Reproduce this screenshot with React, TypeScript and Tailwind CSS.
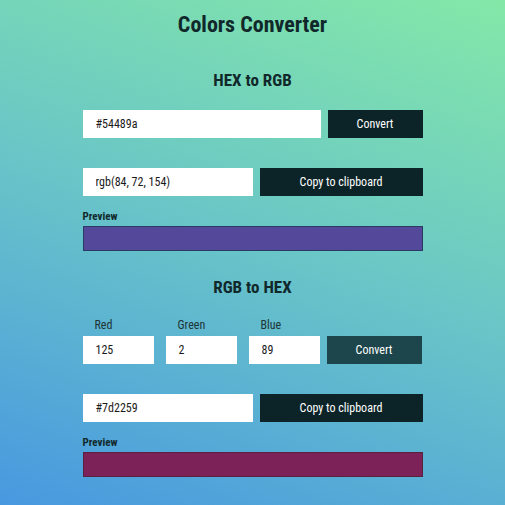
import { useState } from "react";

const font = { fontFamily: '"Roboto Condensed", Roboto, "Liberation Sans", sans-serif' };

function hexToRgb(hex: string) {
  const h = hex.replace("#", "");
  const n = parseInt(h, 16);
  return `rgb(${(n >> 16) & 255}, ${(n >> 8) & 255}, ${n & 255})`;
}

export default function App() {
  const [hex, setHex] = useState("#54489a");
  const [rgb, setRgb] = useState(hexToRgb("#54489a"));
  const [r, setR] = useState("125");
  const [g, setG] = useState("2");
  const [b, setB] = useState("89");
  const [hexOut, setHexOut] = useState("#7d2259");

  const inputCls =
    "h-[28px] bg-white px-[13px] text-[12px] text-[#1a1a1a] outline-none";

  const toHex = (v: string) => (parseInt(v) || 0).toString(16).padStart(2, "0");

  return (
    <div
      style={font}
      className="min-h-[505px] w-full bg-linear-[20deg] from-[#4898e0] via-[#68c4c8] to-[#84e8a8] text-[#10282a]"
    >
      <div className="mx-auto w-[340px] pt-[10px]">
        <h1 className="text-center text-[22px] font-bold leading-[30px]">Colors Converter</h1>

        {/* HEX to RGB */}
        <h2 className="mt-[27px] text-center text-[17px] font-bold leading-[26px]">HEX to RGB</h2>
        <div className="mt-[17px] flex gap-[7px]">
          <input
            value={hex}
            onChange={(e) => setHex(e.target.value)}
            className={`${inputCls} w-[238px]`}
          />
          <button
            onClick={() => setRgb(hexToRgb(hex))}
            className="h-[28px] w-[95px] bg-[#0c2428] text-[12px] font-normal text-white"
          >
            Convert
          </button>
        </div>
        <div className="mt-[30px] flex gap-[7px]">
          <input value={rgb} readOnly className={`${inputCls} w-[170px]`} />
          <button className="h-[28px] w-[163px] bg-[#0c2428] text-[12px] font-normal text-white">
            Copy to clipboard
          </button>
        </div>
        <p className="mt-[14px] text-[11px] font-bold leading-[14px]">Preview</p>
        <div
          className="mt-[2px] h-[25px] w-full border border-[#2a3a60]"
          style={{ backgroundColor: rgb }}
        />

        {/* RGB to HEX */}
        <h2 className="mt-[23px] text-center text-[17px] font-bold leading-[26px]">RGB to HEX</h2>
        <div className="mt-[18px] flex items-end">
          {[
            ["Red", r, setR],
            ["Green", g, setG],
            ["Blue", b, setB],
          ].map(([label, val, set], i) => (
            <div key={label as string} className={`flex flex-col ${i === 0 ? "" : "ml-[12px]"}`}>
              <label className="mb-[3px] pl-[12px] text-[12px] leading-[15px] text-[#1e3436]">
                {label as string}
              </label>
              <input
                value={val as string}
                onChange={(e) => (set as (v: string) => void)(e.target.value)}
                className={`${inputCls} w-[71px]`}
              />
            </div>
          ))}
          <button
            onClick={() => setHexOut("#" + toHex(r) + toHex(g) + toHex(b))}
            className="ml-[7px] h-[28px] w-[95px] bg-[#1c464b] text-[12px] font-normal text-white"
          >
            Convert
          </button>
        </div>
        <div className="mt-[30px] flex gap-[7px]">
          <input value={hexOut} readOnly className={`${inputCls} w-[170px]`} />
          <button className="h-[28px] w-[163px] bg-[#0c2428] text-[12px] font-normal text-white">
            Copy to clipboard
          </button>
        </div>
        <p className="mt-[14px] text-[11px] font-bold leading-[14px]">Preview</p>
        <div
          className="mt-[2px] h-[25px] w-full border border-[#5a2040]"
          style={{ backgroundColor: hexOut }}
        />
      </div>
    </div>
  );
}
